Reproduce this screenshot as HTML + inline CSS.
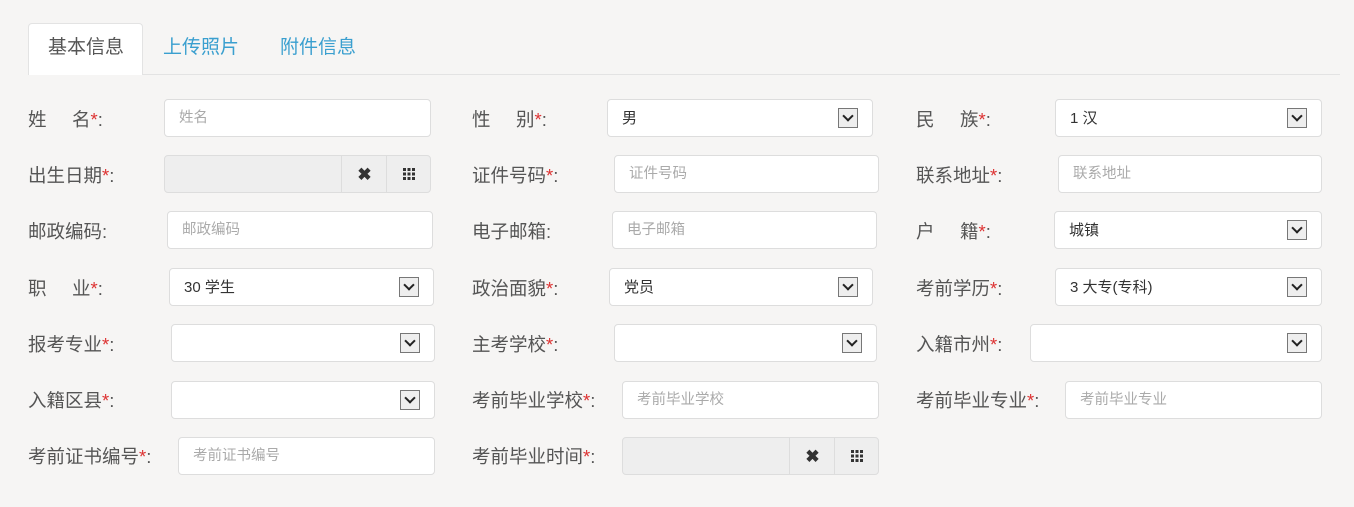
<!DOCTYPE html>
<html><head><meta charset="utf-8"><style>
body{margin:0;width:1354px;height:507px;background:#f6f5f4;font-family:"Liberation Sans","Noto Sans CJK SC",sans-serif;position:relative;overflow:hidden}
.a{position:absolute}
.tab{position:absolute;top:23px;height:52px;line-height:50px;font-size:19px;color:#3a9fcf}
.lb{position:absolute;font-size:18.5px;color:#555;line-height:22px;white-space:pre}
.lb i{font-style:normal;color:#d33}
.lb b{font-weight:normal;position:absolute;left:44px;top:0}
.in{position:absolute;height:38px;background:#fff;border:1px solid #ddd;border-radius:4px;box-sizing:border-box;font-size:14.5px;color:#aaa;line-height:37px;padding-left:14px}
.sel{color:#333;font-size:15px}
.ar{position:absolute;right:14px;top:8px;width:20px;height:20px;border:1px solid #777;background:#eee;box-sizing:border-box}
.ar:after{content:"";position:absolute;left:5px;top:3px;width:6px;height:6px;border-right:2px solid #222;border-bottom:2px solid #222;transform:rotate(45deg)}
.dt{background:#eee;padding:0}
.dt .x{position:absolute;top:0;bottom:0;border-left:1px solid #ddd;font-size:17px;font-weight:bold;color:#333;text-align:center}
.dt .g{position:absolute;top:0;bottom:0;border-left:1px solid #ddd}
.grid{position:absolute;left:50%;top:50%;margin:-6px 0 0 -6px;width:12px;height:12px;background:
linear-gradient(90deg,#333 3px,transparent 3px,transparent 4.5px,#333 4.5px,#333 7.5px,transparent 7.5px,transparent 9px,#333 9px);
-webkit-mask:linear-gradient(#000 3px,transparent 3px,transparent 4.5px,#000 4.5px,#000 7.5px,transparent 7.5px,transparent 9px,#000 9px)}
</style></head><body>
<div class="a" style="left:28px;top:74px;width:1312px;height:1px;background:#e3e3e3"></div>
<div class="a" style="left:28px;top:23px;width:115px;height:52px;background:#fff;border:1px solid #e3e3e3;border-bottom:none;border-radius:4px 4px 0 0;box-sizing:border-box"></div>
<div class="tab" style="left:48px;color:#555">基本信息</div>
<div class="tab" style="left:163px">上传照片</div>
<div class="tab" style="left:280px">附件信息</div>

<!-- col1 -->
<div class="lb" style="left:28px;top:109px">姓<b>名<i>*</i>:</b></div>
<div class="in" style="left:164px;top:99px;width:267px">姓名</div>
<div class="lb" style="left:28px;top:165px">出生日期<i>*</i>:</div>
<div class="in dt" style="left:164px;top:155px;width:267px"><div class="x" style="left:176px;width:45px">✖</div><div class="g" style="left:221px;right:0"><div class="grid"></div></div></div>
<div class="lb" style="left:28px;top:221px">邮政编码:</div>
<div class="in" style="left:167px;top:211px;width:266px">邮政编码</div>
<div class="lb" style="left:28px;top:278px">职<b>业<i>*</i>:</b></div>
<div class="in sel" style="left:169px;top:268px;width:265px">30 学生<div class="ar"></div></div>
<div class="lb" style="left:28px;top:334px">报考专业<i>*</i>:</div>
<div class="in" style="left:171px;top:324px;width:264px"><div class="ar"></div></div>
<div class="lb" style="left:28px;top:390px">入籍区县<i>*</i>:</div>
<div class="in" style="left:171px;top:381px;width:264px"><div class="ar"></div></div>
<div class="lb" style="left:28px;top:446px">考前证书编号<i>*</i>:</div>
<div class="in" style="left:178px;top:437px;width:257px">考前证书编号</div>

<!-- col2 -->
<div class="lb" style="left:472px;top:109px">性<b>别<i>*</i>:</b></div>
<div class="in sel" style="left:607px;top:99px;width:266px">男<div class="ar"></div></div>
<div class="lb" style="left:472px;top:165px">证件号码<i>*</i>:</div>
<div class="in" style="left:614px;top:155px;width:265px">证件号码</div>
<div class="lb" style="left:472px;top:221px">电子邮箱:</div>
<div class="in" style="left:612px;top:211px;width:265px">电子邮箱</div>
<div class="lb" style="left:472px;top:278px">政治面貌<i>*</i>:</div>
<div class="in sel" style="left:609px;top:268px;width:264px">党员<div class="ar"></div></div>
<div class="lb" style="left:472px;top:334px">主考学校<i>*</i>:</div>
<div class="in" style="left:614px;top:324px;width:263px"><div class="ar"></div></div>
<div class="lb" style="left:472px;top:390px">考前毕业学校<i>*</i>:</div>
<div class="in" style="left:622px;top:381px;width:257px">考前毕业学校</div>
<div class="lb" style="left:472px;top:446px">考前毕业时间<i>*</i>:</div>
<div class="in dt" style="left:622px;top:437px;width:257px"><div class="x" style="left:166px;width:45px">✖</div><div class="g" style="left:211px;right:0"><div class="grid"></div></div></div>

<!-- col3 -->
<div class="lb" style="left:916px;top:109px">民<b>族<i>*</i>:</b></div>
<div class="in sel" style="left:1055px;top:99px;width:267px">1 汉<div class="ar"></div></div>
<div class="lb" style="left:916px;top:165px">联系地址<i>*</i>:</div>
<div class="in" style="left:1058px;top:155px;width:264px">联系地址</div>
<div class="lb" style="left:916px;top:221px">户<b>籍<i>*</i>:</b></div>
<div class="in sel" style="left:1054px;top:211px;width:268px">城镇<div class="ar"></div></div>
<div class="lb" style="left:916px;top:278px">考前学历<i>*</i>:</div>
<div class="in sel" style="left:1055px;top:268px;width:267px">3 大专(专科)<div class="ar"></div></div>
<div class="lb" style="left:916px;top:334px">入籍市州<i>*</i>:</div>
<div class="in" style="left:1030px;top:324px;width:292px"><div class="ar"></div></div>
<div class="lb" style="left:916px;top:390px">考前毕业专业<i>*</i>:</div>
<div class="in" style="left:1065px;top:381px;width:257px">考前毕业专业</div>
</body></html>
